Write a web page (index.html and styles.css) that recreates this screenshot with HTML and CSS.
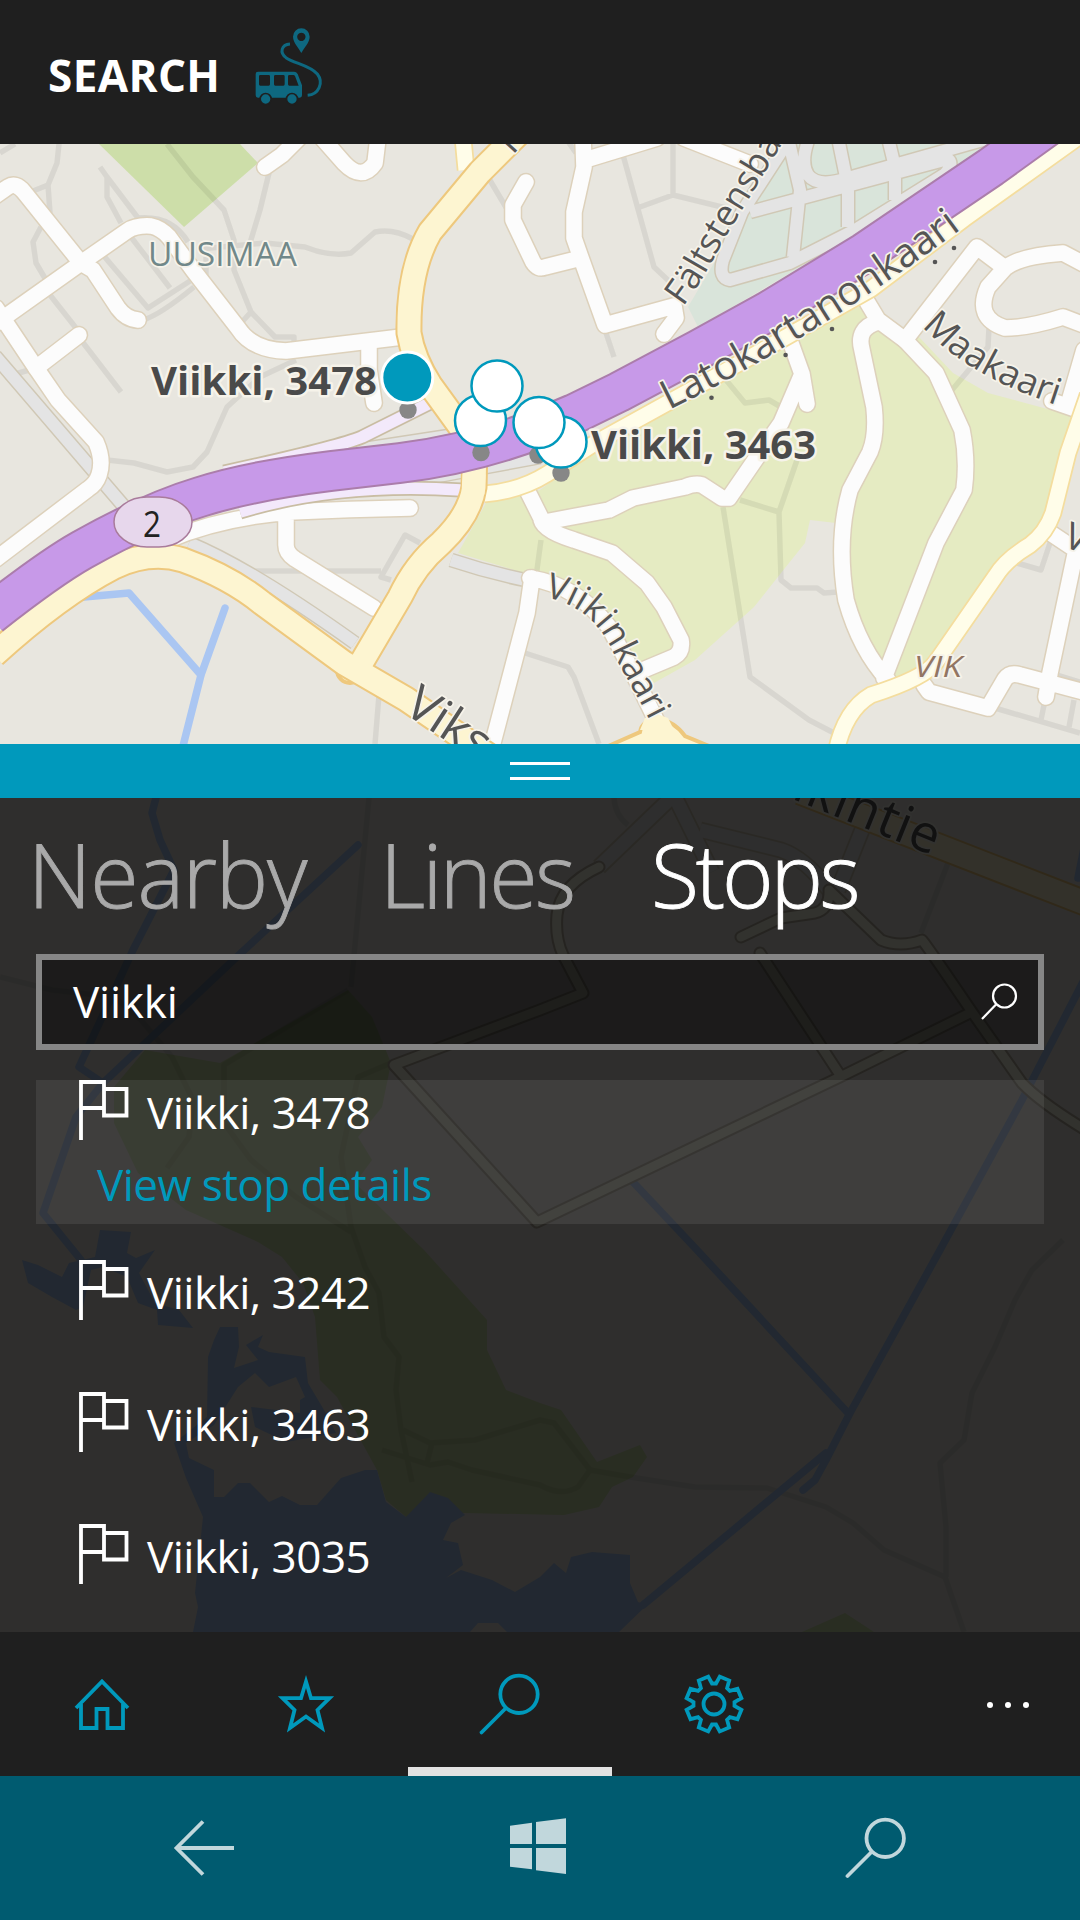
FILE: index.html
```html
<!DOCTYPE html>
<html lang="en">
<head>
<meta charset="utf-8">
<title>Search</title>
<link rel="stylesheet" href="styles.css">
</head>
<body>
<header class="header">
  <h1 class="title">SEARCH</h1>
  <svg class="logo" viewBox="0 0 300 300">
    <path class="logo-route" d="M150 72C124 74 118 98 138 113C162 130 210 136 232 162C252 188 236 224 203 226"/>
    <path class="logo-fill" fill-rule="evenodd" d="M184 99C178 86 159 68 159 50A25 25 0 0 1 209 50C209 68 190 86 184 99ZM184 38a12.500 12.500 0 1 0 .1 0Z"/>
    <path class="logo-fill" fill-rule="evenodd" d="M54 155H162Q169 155 173 162L186 196V226Q186 233 179 233H54Q47 233 47 226V162Q47 155 54 155ZM61 165Q57 165 57 169V193Q57 197 61 197H86Q90 197 90 193V169Q90 165 86 165ZM106 165Q102 165 102 169V193Q102 197 106 197H130Q134 197 134 193V169Q134 165 130 165ZM148 165Q144 165 144 169V193Q144 197 148 197H176L165 168Q163 165 160 165Z"/>
    <g class="logo-wheel"><circle cx="77" cy="237" r="16.500"/><circle cx="156" cy="237" r="16.500"/></g>
  </svg>
</header>

<main class="stage">
  <svg class="map" viewBox="0 144 1080 1488">
    <defs>
      <g id="streets">
        <path d="M-5 196L8 187Q16 182 24 192L81 263L93 270L118 308Q126 319 138 320"/>
        <path d="M-5 324L81 263L127 231Q136 225 151 226Q161 228 169 237L193 270L238 328Q252 350 286 351L402 337"/>
        <path d="M-4 308L36 368L58 400L96 442Q104 460 99 475Q96 484 88 489L-4 559"/>
        <path d="M36 368L79 335M265 167L282 155L299 138M322 138L344 163Q362 182 375 163L378 138M369 345V370L374 403"/>
        <path d="M526 182L513 205V220L533 262Q538 270 545 267L581 258M583 138L584 167L574 212V238L581 258L605 325L674 306L676 318L664 334M585 160L657 138M684 138L750 164"/>
        <path d="M788 335L802 374L807 404M802 374L781 423L764 447L729 498H722L702 485Q695 483 685 487L633 498L609 510L545 522M527 490L541 518Q541 530 574 540L612 553L647 583L664 607L681 640Q683 652 674 657L643 670"/>
        <path d="M530 578Q578 586 609 627L633 673L657 722M532 578L527 613L491 750"/>
        <path d="M860 290L878 320L905 340L936 373L962 430Q968 460 964 490L936 543L884 678M878 322Q856 328 862 350L874 407Q877 435 870 452L850 490Q836 540 846 600Q860 650 888 680"/>
        <path d="M905 340L977 247L1005 268Q1020 256 1063 253L1084 264M1005 268L988 287Q974 318 1005 328Q1028 328 1063 317L1084 325M1084 350L1069 402M1052 401L1084 412"/>
        <path d="M924 685L929 692L988 708L1005 679Q1010 672 1020 675L1084 692M1046 697L1050 673L1076 550L1052 534"/>
        <path d="M168 540Q220 518 289 512Q350 509 410 508M286 514V545Q286 553 295 559L374 608"/>
      </g>
      <g id="lanes">
        <path d="M599 867Q560 885 557 915Q555 938 563 955L583 993L540 1010L394 1065L537 1222L840 1077L972 1012M760 953L840 1075M741 937L781 918L815 913Q830 909 829 890L881 940Q900 948 922 940Q930 950 972 1012L1022 1083Q1040 1102 1084 1129"/>
      </g>
      <g id="greyroads">
        <path d="M-5 356L127 510M189 543Q250 568 355 643M451 560Q490 573 530 581M331 454L455 435L540 428M380 487L470 470L540 457"/>
        <path d="M790 138L742 212L723 260Q718 278 730 280L790 263L855 230L945 174Q954 164 948 159L750 212M788 138L800 190L793 257M838 138L848 187V227M888 138L895 167V200M809 138Q800 162 808 175Q818 188 848 178L990 138"/>
      </g>
      <g id="lanegrey"><path d="M599 867L674 795L712 872M700 830L781 850Q805 858 829 890M862 830L838 890"/></g>
      <g id="yellow">
        <path d="M522 130L480 172L430 232Q408 270 409 333Q413 358 430 385L475 447L474 487Q470 515 441 543Q415 565 400 597L360 665"/>
        <path d="M-6 655Q60 595 114 567Q150 550 183 560Q230 577 262 603L344 663L406 699L495 760M800 792L1090 905"/>
      </g>
      <g id="cream">
        <path d="M484 494Q520 491 547 474L595 443L747 359L871 289L964 219L1080 136M1088 395L1068 453L1053 513Q1046 533 1030 545Q1005 560 995 577L936 662Q925 678 871 695Q845 710 836 752M463 138L466 170"/>
      </g>
      <g id="ramps"><path d="M430 403L362 437Q335 448 224 472M461 490Q340 482 240 512"/></g>
      <path id="motorway" d="M-10 615Q50 568 82 550Q150 512 200 497Q250 481 331 471L400 463Q490 452 574 414L619 392L698 350L767 312L864 253L991 167L1070 110"/>
      <path id="lato" d="M669 410Q826 333 1000 200"/>
      <path id="falt" d="M683 307C703 280 714 258 726 236L798 118"/>
      <path id="maa" d="M922 326Q972 382 1080 412"/>
      <path id="viik" d="M544 597C582 604 602 628 613 652S638 694 664 750"/>
    </defs>

    <rect class="land" y="144" width="1080" height="1488"/>
    <path class="wood" d="M99 144H240L258 163L184 227Z"/>
    <path class="cemetery" d="M778 144H991L950 177L864 230L698 327L688 307L747 207Z"/>
    <path class="park" d="M486 503L540 490L600 445L747 365L862 305L905 337H919L953 373L988 393L1077 417L1053 513L1001 567L936 660L885 690L855 620L836 523L810 520L805 543L781 573L754 607L695 660L654 683L623 640L592 600L540 578L458 553Z"/>
    <path class="wood" d="M114 1087L145 1050L220 1063L348 990L372 1017L391 1063L382 1107L358 1137L372 1160L355 1183L424 1250L487 1320V1350L506 1390L540 1403L561 1410L597 1462L640 1445L647 1457L633 1477L612 1487L599 1507L564 1515L465 1513L406 1517L386 1500L377 1470L337 1397L320 1380L315 1317L303 1283L282 1257L258 1242L186 1210L138 1173L114 1123ZM802 1632L845 1613L874 1632Z"/>
    <path class="lake" d="M22 1260L38 1265L62 1277L69 1263L95 1257L100 1230L131 1232L127 1253L136 1258L155 1250L139 1273L155 1303L179 1310L193 1328L158 1325L157 1310L138 1303L127 1277L103 1267L91 1270L83 1307L76 1310L52 1297L28 1283Z"/>
    <path class="lake" fill-rule="evenodd" d="M214 1340L220 1327L238 1327L239 1347L234 1368L258 1360L246 1345L263 1335L258 1347L269 1352L305 1357L308 1383L324 1410L336 1433L286 1442L255 1427L251 1407L300 1413V1400L305 1397L296 1377L269 1387L255 1373L238 1387L214 1425L186 1443L189 1458L214 1470V1497H224L238 1483H250L269 1502L282 1496L300 1505H317L341 1478L365 1470H377L386 1502L406 1517L430 1492L448 1498L465 1515L451 1523L443 1540L458 1543L463 1565L446 1578L461 1570L492 1580L515 1592L540 1577L554 1563L566 1573L571 1557L592 1552L630 1555V1583L638 1602L647 1605L619 1632H507L498 1623H478L470 1632H193L198 1607L195 1593L203 1517L186 1478L174 1443L207 1417L208 1357Z"/>
    <path class="path" d="M167 144L193 177L224 210L234 240V270L251 312L275 337H294V346M251 312L241 323M269 173L260 210L250 243M200 249L265 243L305 247Q330 257 351 253L375 232Q393 228 413 239M59 144L57 163L48 185L50 213M48 185L33 191M0 153L15 144M100 167L107 177L138 218Q172 215 188 242M107 177V197L121 223M41 227L33 242L36 263L46 280M131 237L170 288M103 255L148 308L190 281M143 320Q160 315 194 287M50 295L76 328M81 340L121 392M5 377L29 370M206 257V277M107 460L134 463L167 472L193 467L207 452L227 407L260 377L296 360M623 155L654 267L671 283M673 144V195L640 207M673 195L726 208M605 330L614 357M567 140L576 153M488 177L507 209M989 327L988 347L952 390M245 571H381M420 543L405 535L381 577L391 580M379 695L375 744M723 507L750 677L809 720L834 733M740 500L779 512L781 580L791 588H817L824 593L838 592M797 460L779 512M726 380L745 403L769 400L781 407M525 653L568 667L574 677L599 744M995 708L1080 733M1045 700L1041 720M1074 700L1069 727M1017 563L1041 570L1051 540M1050 673L1080 682M541 540L536 577"/>
    <path class="path" d="M369 798L351 987M0 977L52 990L114 997L141 1020L172 1057L193 1100L189 1137L167 1168M391 1063L358 1077L341 1157L351 1227L365 1267L379 1293L384 1337L399 1357L396 1390L401 1430L412 1482M348 990L224 1065V1123L251 1160L296 1197L351 1232M403 1430L430 1443L475 1440L540 1420L554 1423L590 1470L578 1487Q561 1497 540 1485L472 1470L448 1462L430 1465L382 1450M432 1443L427 1463M590 1470L630 1477L695 1487L767 1488L826 1507L853 1523L884 1550L945 1577L964 1632M1063 1240L1032 1270L1015 1300L995 1347L972 1393L964 1440L940 1463L946 1527V1577M948 863L921 933M614 798Q615 815 628 825"/>
    <path class="stream" d="M84 597L129 593L201 675M225 608L201 675L182 750M158 790L152 813L160 840L174 870L133 950L79 1067L103 1083M358 845L241 953L103 1083L76 1117L43 1213L81 1260M1084 980L1022 1100L940 1250L850 1413L826 1460L815 1480L803 1490M633 1182L697 1250L848 1413M826 1453L643 1605M1084 848L1078 878"/>
    <use class="case-grey" href="#greyroads"/><use class="fill-grey" href="#greyroads"/>
    <use class="case-grey wide" href="#lanegrey"/><use class="fill-grey wide" href="#lanegrey"/>
    <use class="case-lane" href="#lanes"/><use class="fill-lane" href="#lanes"/>
    <use class="case-street" href="#streets"/><use class="fill-street" href="#streets"/>
    <use class="case-ramp" href="#ramps"/><use class="fill-ramp" href="#ramps"/>
    <use class="case-cream" href="#cream"/><use class="fill-cream" href="#cream"/>
    <g class="junction"><circle cx="350" cy="670" r="13"/><path d="M606 747L640 732Q642 720 658 719Q674 721 685 736L714 748"/></g>
    <use class="case-yellow" href="#yellow"/><use class="fill-yellow" href="#yellow"/>
    <path class="junction-top" d="M645 718L657 714L668 718L674 730H640Z"/>
    <use class="case-motorway" href="#motorway"/><use class="fill-motorway" href="#motorway"/>
    <path class="overpass" d="M474 474L473 494"/>

    <rect class="shield" x="114" y="497" width="78" height="50" rx="33" ry="25"/>
    <text class="shield-text" x="143" y="537" textLength="18" lengthAdjust="spacingAndGlyphs">2</text>

    <g class="road-name">
      <text font-size="40.200"><textPath href="#lato">Latokartanonkaari</textPath></text>
      <text font-size="36"><textPath href="#falt">Fältstensba</textPath></text>
      <text font-size="36.500"><textPath href="#maa">Maakaari</textPath></text>
      <text font-size="35.500"><textPath href="#viik">Viikinkaari</textPath></text>
      <text font-size="49" transform="translate(402 712) rotate(33)">Viks</text>
      <text font-size="37" transform="translate(1062 546) rotate(20)">V</text>
      <text font-size="37" transform="translate(513 155) rotate(-48)">l</text>
      <text font-size="52" letter-spacing="1" transform="translate(748 781) rotate(22)">Viikintie</text>
      <circle cx="711.500" cy="397.700" r="2.300"/><circle cx="785.600" cy="355" r="2.300"/><circle cx="832" cy="329" r="2.300"/><circle cx="935" cy="262" r="2.300"/><circle cx="954" cy="248" r="2.300"/>
    </g>
    <text class="region" x="148" y="266" textLength="149" lengthAdjust="spacingAndGlyphs">UUSIMAA</text>
    <text class="district" x="914" y="676.500" textLength="48" lengthAdjust="spacingAndGlyphs">VIK</text>

    <g class="anchor"><circle cx="408" cy="410" r="8.700"/><circle cx="481" cy="452.500" r="8.700"/><circle cx="538" cy="455" r="8.700"/><circle cx="561" cy="473" r="8.700"/></g>
    <g class="stop">
      <circle class="selected" cx="407.300" cy="377.500" r="25.500"/>
      <circle cx="480.500" cy="420.500" r="25.500"/><circle cx="497" cy="386" r="25.500"/>
      <circle cx="561" cy="442" r="25.500"/><circle cx="539" cy="422.500" r="25.500"/>
    </g>
    <g class="stop-name">
      <text x="151" y="395" textLength="226" lengthAdjust="spacingAndGlyphs">Viikki, 3478</text>
      <text x="591" y="458.500" textLength="225" lengthAdjust="spacingAndGlyphs">Viikki, 3463</text>
    </g>
  </svg>

  <div class="map-window"></div>
  <div class="handle"><span></span><span></span></div>
  <section class="panel">
    <nav class="pivot">
      <a class="nearby">Nearby</a><a class="lines">Lines</a><a class="stops active">Stops</a>
    </nav>
    <div class="search-box">
      <span>Viikki</span>
      <svg width="38" height="38" viewBox="0 0 38 38"><circle cx="24.500" cy="13" r="11.500"/><path d="M16 21.500L2 36"/></svg>
    </div>
    <ul class="results">
      <li class="selected">
        <div class="row"><svg class="flag" viewBox="0 0 50 60"><path d="M2 60V2H25V28H2M25 9H47.500V35.500H25V26"/></svg><span>Viikki, 3478</span></div>
        <a class="details">View stop details</a>
      </li>
      <li><div class="row"><svg class="flag" viewBox="0 0 50 60"><path d="M2 60V2H25V28H2M25 9H47.500V35.500H25V26"/></svg><span>Viikki, 3242</span></div></li>
      <li><div class="row"><svg class="flag" viewBox="0 0 50 60"><path d="M2 60V2H25V28H2M25 9H47.500V35.500H25V26"/></svg><span>Viikki, 3463</span></div></li>
      <li><div class="row"><svg class="flag" viewBox="0 0 50 60"><path d="M2 60V2H25V28H2M25 9H47.500V35.500H25V26"/></svg><span>Viikki, 3035</span></div></li>
    </ul>
  </section>
</main>

<nav class="appbar">
  <a class="tab"><svg viewBox="-32 -32 64 64"><path d="M-26 4L0 -22.500L26 4M-21 0V24H-5.500V5H5.500V24H21V0"/></svg></a>
  <a class="tab"><svg viewBox="-32 -32 64 64"><path d="M0 -22.500L5 -5.800H23.500L11.500 6L16 24L0 12.500L-16 24L-11.500 6L-23.500 -5.800H-5Z"/></svg></a>
  <a class="tab active"><svg viewBox="-32 -32 64 64"><circle cx="9" cy="-9.700" r="18.700"/><path stroke-linecap="round" d="M-4.500 4.500L-28.500 28.500"/></svg></a>
  <a class="tab"><svg viewBox="-32 -32 64 64"><circle r="10.500"/><path d="M2 -20.500L5.800 -27.400L15.200 -23.500L13.100 -15.900L15.900 -13.100L23.500 -15.200L27.400 -5.800L20.500 -2V2L27.400 5.800L23.500 15.200L15.900 13.100L13.100 15.900L15.200 23.500L5.800 27.400L2 20.500H-2L-5.800 27.400L-15.200 23.500L-13.100 15.900L-15.900 13.100L-23.500 15.200L-27.400 5.800L-20.500 2V-2L-27.400 -5.800L-23.500 -15.200L-15.900 -13.100L-13.100 -15.900L-15.200 -23.500L-5.800 -27.400L-2 -20.500Z"/></svg></a>
  <a class="more"><i></i><i></i><i></i></a>
</nav>

<footer class="system">
  <svg viewBox="0 0 64 64"><path d="M63 32H6M32 5.500L5.500 32L32 58.500"/></svg>
  <svg viewBox="0 0 64 64"><path class="solid" d="M2 9.700L24 6.700V28H2ZM28 6L58 2.300V28H28ZM2 32H24V53.300L2 50.700ZM28 32H58V58L28 54.300Z"/></svg>
  <svg viewBox="0 0 64 64"><circle cx="40.200" cy="22.300" r="18.700"/><path stroke-linecap="round" d="M26.500 36L2.500 60"/></svg>
</footer>
</body>
</html>
```

FILE: styles.css
```css
* { box-sizing: border-box; }
body {
  margin: 0;
  width: 1080px;
  height: 1920px;
  overflow: hidden;
  display: flex;
  flex-direction: column;
  background: #1f1f1f;
  color: #fff;
  font-family: "Open Sans", "Noto Sans", sans-serif;
}

/* header */
.header { height: 144px; padding: 20px 0 0 48px; display: flex; }
.title { width: 192px; margin: 25px 0 0; font-size: 44px; line-height: 60px; font-weight: 700; letter-spacing: .4px; }
.logo { width: 100px; height: 100px; }
.logo-fill { fill: #0e6880; }
.logo-route { fill: none; stroke: #0e6880; stroke-width: 9; }
.logo-wheel { fill: #0e6880; stroke: #1f1f1f; stroke-width: 5; }

/* map */
.stage { position: relative; height: 1488px; overflow: hidden; display: flex; flex-direction: column; }
.map { position: absolute; left: 0; top: 0; width: 1080px; height: 1488px; }
.map-window { height: 600px; }
.land { fill: #e8e6df; }
.wood { fill: #cddea9; }
.park { fill: #e5ebc2; }
.cemetery { fill: #d9e4da; }
.lake { fill: #aac6f2; }
.path, .stream, .map use { fill: none; stroke-linejoin: round; }
.path { stroke: #000; stroke-opacity: .065; stroke-width: 5.5; }
.stream { stroke: #aac6f2; stroke-width: 7.5; stroke-linecap: round; }
.case-street { stroke: #ddd1bb; stroke-width: 18.5; stroke-linecap: round; }
.fill-street { stroke: #fcfcfc; stroke-width: 15.5; stroke-linecap: round; }
.case-lane { stroke: #b8b0a0; stroke-width: 13; stroke-linecap: round; }
.fill-lane { stroke: #fcfce8; stroke-width: 9; stroke-linecap: round; stroke-opacity: .95; }
.case-grey { stroke: #d0c8b5; stroke-width: 15; }
.fill-grey { stroke: #e4e4e4; stroke-width: 12; }
.case-grey.wide { stroke-width: 17; }
.fill-grey.wide { stroke-width: 13.5; }
.case-ramp { stroke: #c9bda3; stroke-width: 15; }
.fill-ramp { stroke: #f3e9fb; stroke-width: 11.5; }
.case-cream { stroke: #f4dd9e; stroke-width: 18.5; }
.fill-cream { stroke: #fffde9; stroke-width: 15; }
.case-yellow { stroke: #eec87d; stroke-width: 27; }
.fill-yellow { stroke: #fdf5d1; stroke-width: 23; }
.junction { fill: #fdf5d1; stroke: #eec87d; stroke-width: 4; }
.junction-top { fill: #fdf5d1; }
.overpass { stroke: #fdf5d1; stroke-width: 23; }
.case-motorway { stroke: #ab7dab; stroke-width: 42; }
.fill-motorway { stroke: #c799e8; stroke-width: 38; }
.shield { fill: #e7d7ec; stroke: #a97b9b; stroke-width: 1.5; }
.shield-text { font-size: 36px; fill: #222; }
.road-name { fill: #555; }
.road-name text, .region, .district, .stop-name { stroke: #f6f3ea; stroke-width: 3.5px; stroke-linejoin: round; paint-order: stroke; }
.region { font-size: 33px; fill: #718889; }
.district { font-size: 30px; font-style: italic; fill: #927563; }
.stop-name { font-size: 40px; font-weight: 700; fill: #4a4a4a; stroke-width: 5px; }
.anchor { fill: #878787; }
.stop circle { fill: #fff; stroke: #0099bc; stroke-width: 2.5; }
.stop .selected { fill: #0099bc; stroke: #fff; stroke-width: 3; }

/* splitter */
.handle { position: relative; height: 54px; padding-top: 18px; background: #0099bc; display: flex; flex-direction: column; align-items: center; gap: 12px; }
.handle span { width: 60px; height: 3px; background: #fff; }

/* results panel */
.panel { position: relative; flex: 1; padding: 21px 36px 0; background: rgba(0, 0, 0, .8); }
.pivot { height: 135px; display: flex; font-size: 88px; line-height: 110px; font-weight: 300; color: #a9a9a9; margin-left: -8px; -webkit-text-stroke: .9px currentColor; }
.nearby { width: 352px; letter-spacing: -1.2px; }
.lines { width: 271px; letter-spacing: -2.6px; }
.stops { letter-spacing: -3.2px; }
.pivot .active { color: #fff; }
.search-box { height: 96px; padding: 0 20px 0 31px; border: 6px solid #868686; background: rgba(0, 0, 0, .4); display: flex; align-items: center; justify-content: space-between; font-size: 44px; letter-spacing: -.2px; }
.search-box span { margin-top: -3px; }
.search-box svg { fill: none; stroke: #fff; stroke-width: 2.2; }
.results { list-style: none; margin: 30px 0 0; padding: 0; }
.results li { height: 132px; padding: 36px 0 0 43px; }
.results .selected { height: 144px; padding-top: 0; background: rgba(255, 255, 255, .08); }
.row { height: 72px; display: flex; gap: 18px; font-size: 44px; line-height: 65px; letter-spacing: -.5px; }
.flag { width: 50px; height: 60px; fill: none; stroke: #fff; stroke-width: 3.8; }
.details { display: block; padding-left: 18px; font-size: 44px; line-height: 64px; letter-spacing: -.55px; color: #0099bc; }

/* app bar */
.appbar { height: 144px; display: flex; }
.tab { width: 204px; padding-top: 40px; display: flex; flex-direction: column; align-items: center; justify-content: space-between; }
.tab svg { width: 64px; height: 64px; fill: none; stroke: #0099bc; stroke-width: 3.8; stroke-miterlimit: 10; }
.tab.active::after { content: ""; width: 204px; height: 9px; background: #e2e2e2; }
.more { margin-left: auto; padding: 70px 51px 0 0; display: flex; gap: 12px; }
.more i { width: 6px; height: 6px; border-radius: 3px; background: #fff; }

/* system navigation */
.system { height: 144px; padding: 40px 171px 0; background: #005b70; display: flex; justify-content: space-between; }
.system svg { width: 64px; height: 64px; fill: none; stroke: #c1d7dc; stroke-width: 3.8; }
.system .solid { fill: #c1d7dc; stroke: none; }
```
